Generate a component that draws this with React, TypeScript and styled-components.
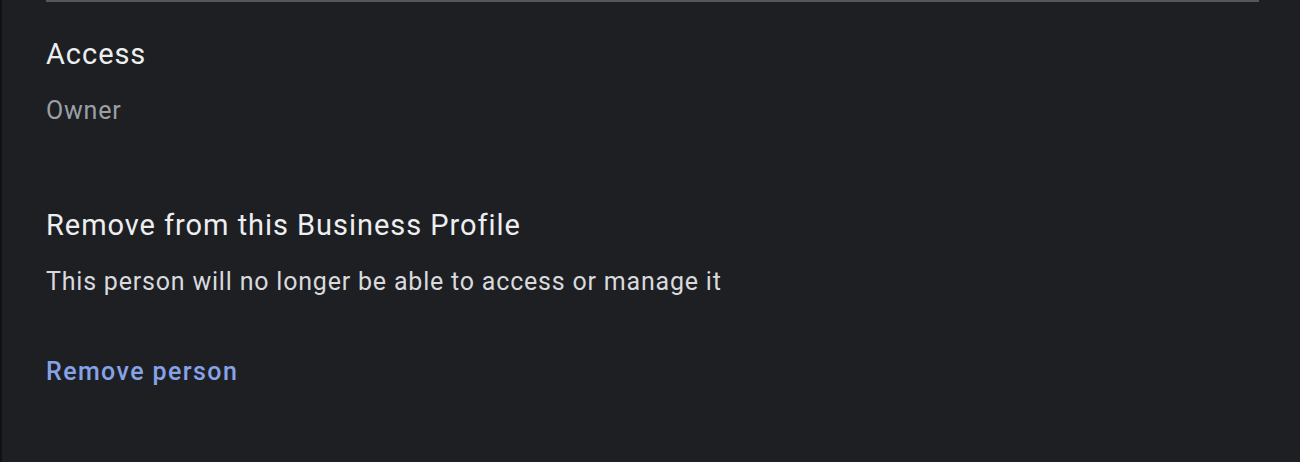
import React from "react";
import styled, { createGlobalStyle } from "styled-components";

const Global = createGlobalStyle`
  html, body { margin: 0; padding: 0; background: #1e1f23; }
  body { font-family: Roboto, "Noto Sans", Arial, sans-serif; -webkit-font-smoothing: antialiased; }
`;

const Page = styled.div`
  width: 1300px;
  height: 462px;
  background: #1e1f23;
  border-left: 2px solid #111214;
  box-sizing: border-box;
  overflow: hidden;
`;

const Panel = styled.div`
  margin: 0 41px 0 44px;
  border-top: 2px solid #55575b;
  display: flex;
  flex-direction: column;
`;

const Section = styled.section<{ $top: number }>`
  display: flex;
  flex-direction: column;
  padding-top: ${(p) => p.$top}px;
`;

const Title = styled.h2`
  margin: 0;
  font-size: 29px;
  line-height: 34px;
  font-weight: 400;
  letter-spacing: 0.95px;
  color: #eceef0;
`;

const Text = styled.p<{ $muted?: boolean; $gap: number }>`
  margin: ${(p) => p.$gap}px 0 0;
  font-size: 25px;
  line-height: 30px;
  font-weight: 400;
  letter-spacing: 0.8px;
  color: ${(p) => (p.$muted ? "#9aa0a6" : "#d8dadd")};
`;

const LinkButton = styled.button`
  align-self: flex-start;
  margin-top: 60px;
  padding: 0;
  border: 0;
  background: none;
  font-family: inherit;
  font-size: 25px;
  line-height: 30px;
  font-weight: 500;
  letter-spacing: 1.4px;
  color: #85a3e6;
  cursor: pointer;
`;

export default function App() {
  return (
    <Page>
      <Global />
      <Panel>
        <Section $top={35}>
          <Title>Access</Title>
          <Text $muted $gap={25}>Owner</Text>
        </Section>
        <Section $top={82}>
          <Title>Remove from this Business Profile</Title>
          <Text $gap={25}>This person will no longer be able to access or manage it</Text>
          <LinkButton>Remove person</LinkButton>
        </Section>
      </Panel>
    </Page>
  );
}
